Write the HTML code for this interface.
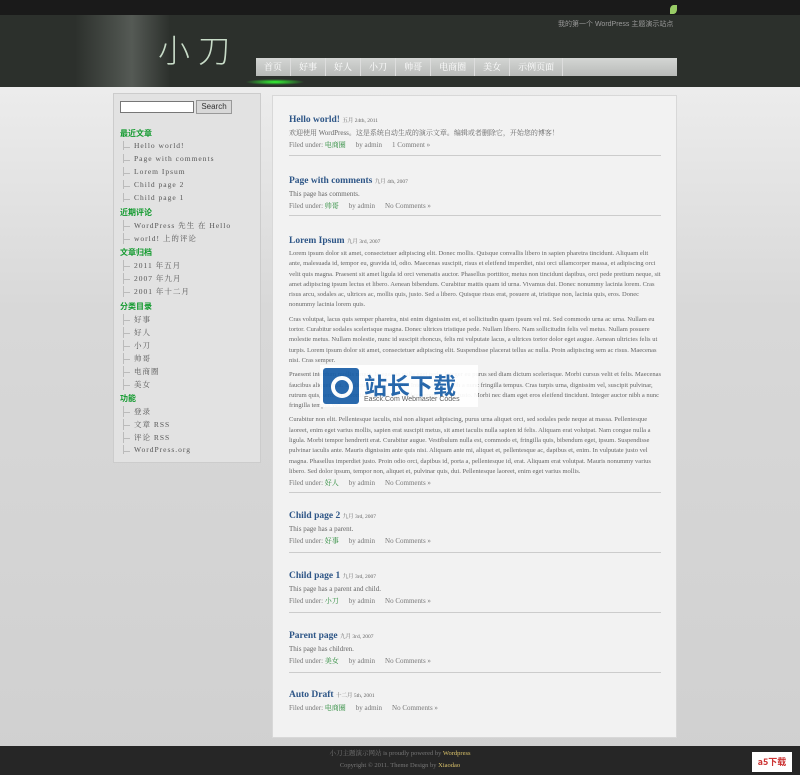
<!DOCTYPE html>
<html><head><meta charset="utf-8"><style>
*{margin:0;padding:0;box-sizing:border-box}
body{width:800px;height:775px;overflow:hidden;position:relative;background:linear-gradient(#f4f4f4,#d8d8d8 40%,#d0d0d0);font-family:"Liberation Serif","Noto Serif CJK SC",serif;color:#555}
.top{position:absolute;left:0;top:0;width:800px;height:15px;background:#1a1a1a}
.hd{position:absolute;left:0;top:15px;width:800px;height:72px;background:#2c302c}
.glow{position:absolute;left:75px;top:15px;width:95px;height:72px;background:linear-gradient(90deg,#2c302c,#4a4f4a 45%,#555a55 60%,#2c302c)}
.logo{position:absolute;left:158px;top:26px;font:32px "Noto Sans CJK SC",sans-serif;color:#c8dcc8;letter-spacing:8px;font-weight:300}
.tag{position:absolute;left:558px;top:19px;font:7px "Liberation Sans","Noto Sans CJK SC",sans-serif;color:#999}
.nav{position:absolute;left:256px;top:58px;width:421px;height:18px;background:linear-gradient(#d4d6d4,#b8bab8);font:9px "Liberation Serif","Noto Serif CJK SC",serif;color:#fff}
.nav span{float:left;padding:0 8px;line-height:18px;border-right:1px solid #ddd}
.gl{position:absolute;left:245px;top:79px;width:60px;height:6px;background:radial-gradient(#3f3,transparent 70%)}
.side{position:absolute;left:113px;top:93px;width:148px;height:370px;background:#e2e2e2;border:1px solid #ccc;font-size:7.5px}
.side input{position:absolute;left:6px;top:7px;width:74px;height:12px;border:1px solid #777;background:#fff}
.side .btn{position:absolute;left:82px;top:6px;width:36px;height:14px;background:#d8d8d8;border:1px solid #999;font:8px "Liberation Sans",sans-serif;color:#333;text-align:center;line-height:12px}
.sh{position:absolute;left:6px;color:#129a2e;font-weight:bold;font-size:8px;font-family:"Noto Sans CJK SC",sans-serif}
.li{position:absolute;left:9px;color:#555;letter-spacing:1px;padding-left:10px;border-left:1px solid #bbb;white-space:nowrap}
.li:before{content:"";position:absolute;left:0;top:6px;width:6px;border-top:1px solid #bbb}
.main{position:absolute;left:272px;top:95px;width:405px;height:643px;background:#f2f2f2;border:1px solid #d8d8d8}
.p{position:absolute;left:16px;width:372px}
.t{font-weight:bold;color:#2e5687;font-size:9.5px}
.d{font-size:5.5px;color:#666;font-weight:normal}
.x{font-size:7px;color:#666;margin-top:3px;line-height:10px}
.m{font-size:7px;color:#777;margin-top:2px}
.m b{color:#2a8a3a;font-weight:normal;margin-right:10px}
.m i{font-style:normal;margin-right:10px}
.hr{position:absolute;left:16px;width:372px;border-top:1px solid #ccc}
.wm{position:absolute;left:320px;top:365px;width:158px;height:42px;background:#fff;opacity:.93}
.wm .ic{position:absolute;left:3px;top:3px;width:36px;height:36px;background:#1a5fa8;border-radius:3px}
.wm .ic:after{content:"";position:absolute;left:8px;top:8px;width:14px;height:14px;border:4px solid #fff;border-radius:50%}
.wm .a{position:absolute;left:44px;top:2px;font:bold 23px "Noto Sans CJK SC",sans-serif;color:#1a5fa8}
.wm .b{position:absolute;left:44px;top:31px;font:7px "Liberation Sans",sans-serif;color:#555}
.ft{position:absolute;left:0;top:746px;width:800px;height:29px;background:#262626;font-size:6.5px;color:#777;text-align:center;line-height:12px;padding-top:2px}
.ft span{color:#d8c06a}
.sp{display:block;height:4px}
</style></head><body>
<div class="top"></div>
<div class="hd"></div><div class="glow"></div>
<div class="logo">小刀</div>
<div class="tag">我的第一个 WordPress 主题演示站点</div>
<div style="position:absolute;left:670px;top:5px;width:7px;height:9px;background:#9c6;border-radius:50% 0"></div>
<div class="nav"><span>首页</span><span>好事</span><span>好人</span><span>小刀</span><span>帅哥</span><span>电商圈</span><span>美女</span><span>示例页面</span></div>
<div class="gl"></div>
<div class="side">
<input><div class="btn">Search</div>
<div class="sh" style="top:34px">最近文章</div>
<div class="li" style="top:47px">Hello world!</div>
<div class="li" style="top:60px">Page with comments</div>
<div class="li" style="top:73px">Lorem Ipsum</div>
<div class="li" style="top:86px">Child page 2</div>
<div class="li" style="top:99px">Child page 1</div>
<div class="sh" style="top:113px">近期评论</div>
<div class="li" style="top:126px">WordPress 先生 在 Hello</div>
<div class="li" style="top:139px">world! 上的评论</div>
<div class="sh" style="top:153px">文章归档</div>
<div class="li" style="top:166px">2011 年五月</div>
<div class="li" style="top:179px">2007 年九月</div>
<div class="li" style="top:192px">2001 年十二月</div>
<div class="sh" style="top:207px">分类目录</div>
<div class="li" style="top:220px">好事</div>
<div class="li" style="top:233px">好人</div>
<div class="li" style="top:246px">小刀</div>
<div class="li" style="top:259px">帅哥</div>
<div class="li" style="top:272px">电商圈</div>
<div class="li" style="top:285px">美女</div>
<div class="sh" style="top:299px">功能</div>
<div class="li" style="top:312px">登录</div>
<div class="li" style="top:325px">文章 RSS</div>
<div class="li" style="top:338px">评论 RSS</div>
<div class="li" style="top:351px">WordPress.org</div>
</div>
<div class="main">
<div class="p" style="top:19px"><div class="t">Hello world! <span class="d">五月 24th, 2011</span></div><div class="x">欢迎使用 WordPress。这是系统自动生成的演示文章。编辑或者删除它，开始您的博客！</div><div class="m">Filed under: <b>电商圈</b><i>by admin</i>1 Comment »</div></div>
<div class="hr" style="top:59px"></div>
<div class="p" style="top:80px"><div class="t">Page with comments <span class="d">九月 4th, 2007</span></div><div class="x">This page has comments.</div><div class="m">Filed under: <b>帅哥</b><i>by admin</i>No Comments »</div></div>
<div class="hr" style="top:119px"></div>
<div class="p" style="top:140px"><div class="t">Lorem Ipsum <span class="d">九月 3rd, 2007</span></div>
<div class="x" style="font-size:6.5px;line-height:10.3px;height:229px;overflow:hidden">Lorem ipsum dolor sit amet, consectetuer adipiscing elit. Donec mollis. Quisque convallis libero in sapien pharetra tincidunt. Aliquam elit ante, malesuada id, tempor eu, gravida id, odio. Maecenas suscipit, risus et eleifend imperdiet, nisi orci ullamcorper massa, et adipiscing orci velit quis magna. Praesent sit amet ligula id orci venenatis auctor. Phasellus porttitor, metus non tincidunt dapibus, orci pede pretium neque, sit amet adipiscing ipsum lectus et libero. Aenean bibendum. Curabitur mattis quam id urna. Vivamus dui. Donec nonummy lacinia lorem. Cras risus arcu, sodales ac, ultrices ac, mollis quis, justo. Sed a libero. Quisque risus erat, posuere at, tristique non, lacinia quis, eros. Donec nonummy lacinia lorem quis.<span class="sp"></span>Cras volutpat, lacus quis semper pharetra, nisi enim dignissim est, et sollicitudin quam ipsum vel mi. Sed commodo urna ac urna. Nullam eu tortor. Curabitur sodales scelerisque magna. Donec ultrices tristique pede. Nullam libero. Nam sollicitudin felis vel metus. Nullam posuere molestie metus. Nullam molestie, nunc id suscipit rhoncus, felis mi vulputate lacus, a ultrices tortor dolor eget augue. Aenean ultricies felis ut turpis. Lorem ipsum dolor sit amet, consectetuer adipiscing elit. Suspendisse placerat tellus ac nulla. Proin adipiscing sem ac risus. Maecenas nisi. Cras semper.<span class="sp"></span>Praesent interdum mollis neque. In egestas nulla eget pede. Integer eu purus sed diam dictum scelerisque. Morbi cursus velit et felis. Maecenas faucibus aliquet erat. In aliquet rhoncus tellus. Integer auctor nibh a nunc fringilla tempus. Cras turpis urna, dignissim vel, suscipit pulvinar, rutrum quis, sem. Ut lobortis convallis dui. Sed nonummy orci a justo. Morbi nec diam eget eros eleifend tincidunt. Integer auctor nibh a nunc fringilla tempus vel.<span class="sp"></span>Curabitur non elit. Pellentesque iaculis, nisl non aliquet adipiscing, purus urna aliquet orci, sed sodales pede neque at massa. Pellentesque laoreet, enim eget varius mollis, sapien erat suscipit metus, sit amet iaculis nulla sapien id felis. Aliquam erat volutpat. Nam congue nulla a ligula. Morbi tempor hendrerit erat. Curabitur augue. Vestibulum nulla est, commodo et, fringilla quis, bibendum eget, ipsum. Suspendisse pulvinar iaculis ante. Mauris dignissim ante quis nisi. Aliquam ante mi, aliquet et, pellentesque ac, dapibus et, enim. In vulputate justo vel magna. Phasellus imperdiet justo. Proin odio orci, dapibus id, porta a, pellentesque id, erat. Aliquam erat volutpat. Mauris nonummy varius libero. Sed dolor ipsum, tempor non, aliquet et, pulvinar quis, dui. Pellentesque laoreet, enim eget varius mollis.</div></div>
<div class="p" style="top:380px"><div class="m">Filed under: <b>好人</b><i>by admin</i>No Comments »</div></div>
<div class="hr" style="top:396px"></div>
<div class="p" style="top:415px"><div class="t">Child page 2 <span class="d">九月 3rd, 2007</span></div><div class="x">This page has a parent.</div><div class="m">Filed under: <b>好事</b><i>by admin</i>No Comments »</div></div>
<div class="hr" style="top:456px"></div>
<div class="p" style="top:475px"><div class="t">Child page 1 <span class="d">九月 3rd, 2007</span></div><div class="x">This page has a parent and child.</div><div class="m">Filed under: <b>小刀</b><i>by admin</i>No Comments »</div></div>
<div class="hr" style="top:516px"></div>
<div class="p" style="top:535px"><div class="t">Parent page <span class="d">九月 3rd, 2007</span></div><div class="x">This page has children.</div><div class="m">Filed under: <b>美女</b><i>by admin</i>No Comments »</div></div>
<div class="hr" style="top:576px"></div>
<div class="p" style="top:594px"><div class="t">Auto Draft <span class="d">十二月 5th, 2001</span></div><div class="m" style="margin-top:3px">Filed under: <b>电商圈</b><i>by admin</i>No Comments »</div></div>
</div>
<div class="wm"><div class="ic"></div><div class="a">站长下载</div><div class="b">Easck.Com Webmaster Codes</div></div>
<div class="ft">小刀主题演示网站 is proudly powered by <span>Wordpress</span><br>Copyright © 2011. Theme Design by <span>Xiaodao</span></div>
<div style="position:absolute;left:752px;top:752px;width:40px;height:20px;background:#fff;font:bold 9px 'Noto Sans CJK SC',sans-serif;color:#c33;line-height:20px;text-align:center">a5下载</div>
</body></html>
